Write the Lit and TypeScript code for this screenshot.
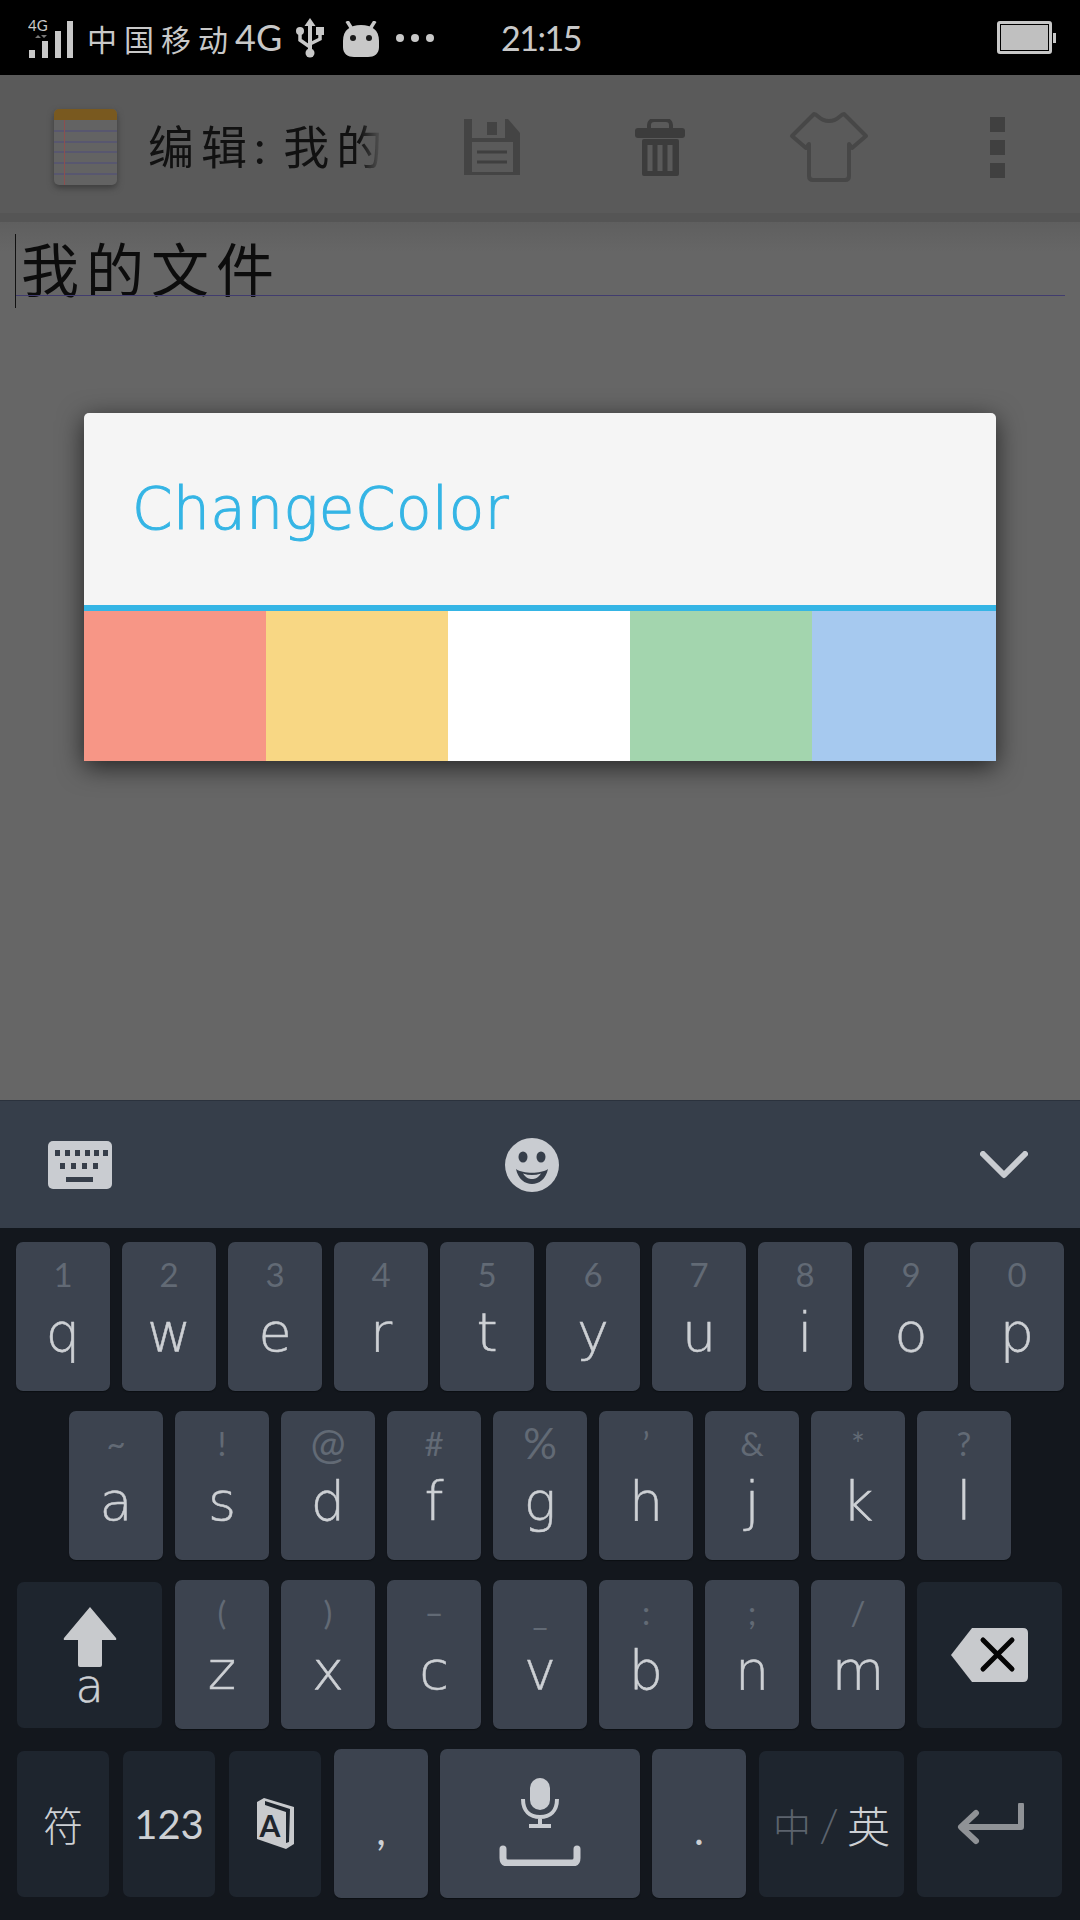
import { css, html, LitElement, svg } from 'lit';
import { customElement } from 'lit/decorators.js';

const SWATCHES = ['#f79686', '#f8d784', '#ffffff', '#a3d5ae', '#a6c9ef'];

const ROW_1 = [['1', 'q'], ['2', 'w'], ['3', 'e'], ['4', 'r'], ['5', 't'], ['6', 'y'], ['7', 'u'], ['8', 'i'], ['9', 'o'], ['0', 'p']];
const ROW_2 = [['~', 'a'], ['!', 's'], ['@', 'd'], ['#', 'f'], ['%', 'g'], ['’', 'h'], ['&', 'j'], ['*', 'k'], ['?', 'l']];
const ROW_3 = [['(', 'z'], [')', 'x'], ['–', 'c'], ['_', 'v'], [':', 'b'], [';', 'n'], ['/', 'm']];

const icon = (w: number, h: number, body: unknown) => html`<svg width=${w} height=${h} viewBox="0 0 ${w} ${h}">${body}</svg>`;

const signalIcon = icon(46, 42, svg`
    <text x="0" y="14" font-size="15" font-family="Lato, sans-serif" fill="#c8c8c8">4G</text>
    <path d="M7 21l3-3 3 3zM13 18h6l-3 3z" fill="#777" />
    <rect x="1" y="33" width="6" height="8" fill="#c8c8c8" />
    <rect x="14" y="24" width="6" height="17" fill="#c8c8c8" />
    <rect x="27" y="14" width="6" height="27" fill="#c8c8c8" />
    <rect x="39" y="4" width="6" height="37" fill="#c8c8c8" />`);

const usbIcon = icon(30, 40, svg`
    <path d="M15 0l5.500 8h-3.500v24h-4V8H9.500z" fill="#c8c8c8" />
    <circle cx="15" cy="35" r="4.500" fill="#c8c8c8" />
    <path d="M15 29L5 22V15M15 26l10-5v-6" fill="none" stroke="#c8c8c8" stroke-width="3.500" />
    <circle cx="5" cy="13" r="4" fill="#c8c8c8" />
    <rect x="21" y="9" width="8" height="8" fill="#c8c8c8" />`);

const androidIcon = icon(36, 36, svg`
    <path d="M4 0l5 8M32 0l-5 8" stroke="#c8c8c8" stroke-width="3.500" />
    <path d="M18 4C29 4 36 9 36 20V26C36 33 31 36 25 36H11C5 36 0 33 0 26V20C0 9 7 4 18 4Z" fill="#c8c8c8" />
    <circle cx="10" cy="17" r="3" fill="#1a1a1a" />
    <circle cx="26" cy="17" r="3" fill="#1a1a1a" />`);

const notepadIcon = icon(63, 76, svg`
    <rect x="0" y="0" width="63" height="76" rx="5" fill="#636363" />
    <path d="M0 11V5a5 5 0 0 1 5-5h53a5 5 0 0 1 5 5v6z" fill="#79591f" />
    <path d="M0 22h63M0 33h63M0 43h63M0 54h63M0 65h63" stroke="#4f4c7c" stroke-width="1" />
    <path d="M10.500 11v65" stroke="#8c4f4f" stroke-width="1" />`);

const saveIcon = icon(56, 56, svg`
    <path d="M0 0H44L56 14V56H0Z" fill="#444" />
    <rect x="8" y="0" width="33" height="19" fill="#5a5a5a" />
    <rect x="23" y="3" width="10" height="13" fill="#434343" />
    <rect x="8" y="23" width="41" height="30" fill="#5a5a5a" />
    <path d="M13 33h30M13 43h30" stroke="#3f3f3f" stroke-width="3" />`);

const trashIcon = icon(50, 57, svg`
    <path d="M14 9V6a5 5 0 0 1 5-5h12a5 5 0 0 1 5 5v3" fill="none" stroke="#3c3c3c" stroke-width="4" />
    <rect x="0" y="9" width="50" height="10" rx="3" fill="#3c3c3c" />
    <rect x="7" y="20" width="37" height="37" rx="2" fill="#3c3c3c" />
    <path d="M15 26v26M25 26v26M35 26v26" stroke="#5a5a5a" stroke-width="5" />`);

const shirtIcon = icon(80, 72, svg`
    <path d="M25 3C29 3 30 10 40 10C50 10 51 3 55 3L77 25L63 37L60 33V65Q60 69 56 69H24Q20 69 20 65V33L17 37L3 25Z"
        fill="none" stroke="#474747" stroke-width="4" stroke-linejoin="round" />`);

const keyboardIcon = icon(64, 48, svg`
    <rect width="64" height="48" rx="5" fill="#c9ccd1" />
    <g fill="#363e4a">
        <rect x="7" y="9" width="5" height="6" /><rect x="17" y="9" width="5" height="6" /><rect x="27" y="9" width="5" height="6" />
        <rect x="37" y="9" width="5" height="6" /><rect x="46" y="9" width="5" height="6" /><rect x="55" y="9" width="5" height="6" />
        <rect x="12" y="22" width="5" height="6" /><rect x="23" y="22" width="5" height="6" /><rect x="34" y="22" width="5" height="6" /><rect x="45" y="22" width="5" height="6" />
        <rect x="18" y="36" width="27" height="5" />
    </g>`);

const smileIcon = icon(54, 54, svg`
    <circle cx="27" cy="27" r="27" fill="#c9ccd1" />
    <ellipse cx="18" cy="19" rx="4.500" ry="5.500" fill="#363e4a" />
    <ellipse cx="36" cy="19" rx="4.500" ry="5.500" fill="#363e4a" />
    <path d="M11 31C18 36 36 36 43 31C41 41 34 46 27 46C20 46 13 41 11 31Z" fill="#363e4a" />
    <path d="M18 35.500C24 37.500 30 37.500 36 35.500C33 40 30 41 27 41C24 41 21 40 18 35.500Z" fill="#c9ccd1" />`);

const chevronIcon = icon(48, 28, svg`
    <path d="M3 3L24 24L45 3" fill="none" stroke="#c9ccd1" stroke-width="6" stroke-linecap="round" stroke-linejoin="round" />`);

const shiftIcon = icon(54, 62, svg`
    <path d="M27 1L53 32Q54 34 52 34H39V59Q39 61 37 61H17Q15 61 15 59V34H2Q0 34 1 32Z" fill="#c8cacd" />`);

const deleteIcon = icon(77, 54, svg`
    <path d="M21 0H72Q77 0 77 5V49Q77 54 72 54H21L0 27Z" fill="#c8cacd" />
    <path d="M32 12L61 41M61 12L32 41" stroke="#050505" stroke-width="5" stroke-linecap="round" />`);

const enterIcon = icon(68, 42, svg`
    <path d="M65 2V24H6M20 10L5 24L20 38" fill="none" stroke="#8f9296" stroke-width="6" stroke-linecap="round" stroke-linejoin="round" />`);

const bookIcon = icon(37, 52, svg`
    <path d="M0 4L7 0L37 9V46L29 51L0 41Z" fill="#c8cacd" />
    <path d="M8 3L33 11L32 44L29 45V14L8 7Z" fill="#1e252e" />
    <text x="13" y="39" font-size="30" font-weight="700" text-anchor="middle" font-family="Lato, sans-serif" fill="#1e252e">A</text>`);

const spaceIcon = icon(82, 88, svg`
    <rect x="31" y="0" width="20" height="32" rx="10" fill="#c9ccd1" />
    <path d="M24 21C24 33 31 39 41 39C51 39 58 33 58 21M41 39V48M30 48H52" fill="none" stroke="#c9ccd1" stroke-width="4" />
    <path d="M4 71V80Q4 85 9 85H73Q78 85 78 80V71" fill="none" stroke="#c9ccd1" stroke-width="7" stroke-linecap="round" />`);

@customElement('soft-keyboard')
export class SoftKeyboard extends LitElement {
    static styles = css`
        :host {
            display: block;
            background: #13171d;
            font-family: Lato, 'Noto Sans CJK SC', sans-serif;
        }
        .tools {
            height: 127px;
            border-top: 1px solid #2b323d;
            background: #363e4a;
            display: flex;
            align-items: center;
            padding: 0 52px 0 48px;
            justify-content: space-between;
        }
        .smile {
            display: flex;
            margin-right: 28px;
        }
        .keys {
            display: flex;
            flex-direction: column;
            gap: 20px;
            padding: 14px 0 22px;
        }
        .row {
            display: flex;
            gap: 12px;
            height: 149px;
        }
        .row.first {
            padding-left: 16px;
        }
        .row.second {
            padding-left: 69px;
        }
        .row.side {
            padding-left: 17px;
        }
        .key {
            width: 94px;
            height: 149px;
            box-sizing: border-box;
            padding-top: 12px;
            border-radius: 7px;
            background: #3c434f;
            box-shadow: 0 1px 1px #0c0f13;
            display: flex;
            flex-direction: column;
            align-items: center;
            flex: none;
        }
        .hint {
            font-size: 33px;
            line-height: 40px;
            color: #626a75;
        }
        .hint.big {
            font-size: 42px;
        }
        .letter {
            margin-top: 9px;
            font-family: 'DejaVu Sans', sans-serif;
            font-size: 54px;
            line-height: 60px;
            font-weight: 200;
            color: #cdd0d4;
            -webkit-text-stroke: 0.5px #cdd0d4;
        }
        .punct {
            padding-top: 50px;
            font-size: 42px;
            line-height: 60px;
            color: #cdd0d4;
        }
        .key.space {
            width: 200px;
            padding-top: 29px;
        }
        .fn {
            margin: 2px 2px 0 0;
            width: 92px;
            height: 146px;
            padding-top: 0;
            background: #1e252e;
            box-shadow: none;
            justify-content: center;
            color: #cdd0d4;
        }
        .fn.wide {
            width: 145px;
            margin-right: 1px;
        }
        .fn.last {
            margin-right: 0;
        }
        .fn.shift {
            justify-content: flex-start;
            padding-top: 24px;
        }
        .shift-letter {
            font-family: 'DejaVu Sans', sans-serif;
            font-size: 46px;
            font-weight: 200;
            line-height: 36px;
            -webkit-text-stroke: 0.5px #cdd0d4;
        }
        .sym {
            font-size: 40px;
            font-weight: 300;
        }
        .num {
            font-size: 40px;
        }
        .lang {
            flex-direction: row;
            font-size: 38px;
            gap: 8px;
            font-weight: 300;
        }
        .dim {
            color: #5c636d;
        }
        .slash {
            font-size: 46px;
        }
        .en {
            font-size: 43px;
        }
        .after-fn {
            margin-left: -1px;
        }
        .after-period {
            margin-left: 1px;
        }
    `;

    private charKey([hint, letter]: string[]) {
        const big = hint === '@' || hint === '%';
        return html`<div class="key"><span class="hint ${big ? 'big' : ''}">${hint}</span><span class="letter">${letter}</span></div>`;
    }

    render() {
        return html`
            <div class="tools">${keyboardIcon}<span class="smile">${smileIcon}</span>${chevronIcon}</div>
            <div class="keys">
                <div class="row first">${ROW_1.map((k) => this.charKey(k))}</div>
                <div class="row second">${ROW_2.map((k) => this.charKey(k))}</div>
                <div class="row side">
                    <div class="key fn wide shift">${shiftIcon}<span class="shift-letter">a</span></div>
                    ${ROW_3.map((k) => this.charKey(k))}
                    <div class="key fn wide last">${deleteIcon}</div>
                </div>
                <div class="row side">
                    <div class="key fn"><span class="sym">符</span></div>
                    <div class="key fn"><span class="num">123</span></div>
                    <div class="key fn">${bookIcon}</div>
                    <div class="key punct after-fn">,</div>
                    <div class="key space">${spaceIcon}</div>
                    <div class="key punct">.</div>
                    <div class="key fn wide lang after-period">
                        <span class="dim">中</span><span class="dim slash">/</span><span class="en">英</span>
                    </div>
                    <div class="key fn wide last">${enterIcon}</div>
                </div>
            </div>
        `;
    }
}

@customElement('app-root')
export class AppRoot extends LitElement {
    static styles = css`
        :host {
            display: flex;
            flex-direction: column;
            width: 1080px;
            height: 1920px;
            overflow: hidden;
            font-family: Lato, 'Noto Sans CJK SC', sans-serif;
        }
        .status {
            height: 75px;
            flex: none;
            background: #000;
            color: #c8c8c8;
            display: flex;
            align-items: center;
            padding: 0 24px 0 28px;
        }
        .carrier {
            margin-left: 13px;
            font-size: 30px;
            letter-spacing: 7px;
            width: 197px;
            white-space: nowrap;
        }
        .carrier b {
            font-size: 36px;
            font-weight: 400;
            letter-spacing: 0;
        }
        .usb {
            display: flex;
            margin: 0 0 0 11px;
        }
        .droid {
            display: flex;
            margin: 2px 0 0 18px;
        }
        .more {
            display: flex;
            gap: 7px;
            margin-left: 17px;
        }
        .more i {
            width: 8px;
            height: 8px;
            border-radius: 50%;
            background: #c8c8c8;
        }
        .time {
            margin-left: 67px;
            font-size: 34px;
            letter-spacing: -1.500px;
        }
        .battery {
            margin-left: auto;
            display: flex;
            align-items: center;
            gap: 1px;
        }
        .battery-body {
            width: 55px;
            height: 33px;
            box-sizing: border-box;
            border: 3px solid #c8c8c8;
            border-radius: 3px;
            padding: 1px;
            background: #000;
        }
        .battery-body i {
            display: block;
            height: 100%;
            background: #c0c0c0;
        }
        .battery-tip {
            width: 3px;
            height: 10px;
            background: #c8c8c8;
        }
        .toolbar {
            height: 132px;
            flex: none;
            background: #5a5a5a;
            display: flex;
            align-items: center;
            padding: 6px 0 0 54px;
            border-bottom: 9px solid #555;
        }
        .toolbar svg {
            display: block;
            flex: none;
        }
        .note {
            filter: drop-shadow(0 3px 3px #3c3c3c);
        }
        .title {
            margin: -6px 0 0 31px;
            width: 240px;
            white-space: nowrap;
            font-size: 46px;
            letter-spacing: 7px;
            word-spacing: -8px;
            color: #111;
            -webkit-mask-image: linear-gradient(to right, #000 88%, transparent 98%);
            mask-image: linear-gradient(to right, #000 88%, transparent 98%);
        }
        .save {
            margin-left: 76px;
        }
        .trash {
            margin-left: 115px;
        }
        .shirt {
            margin-left: 104px;
        }
        .menu {
            margin-left: 121px;
            display: flex;
            flex-direction: column;
            gap: 8px;
        }
        .menu i {
            display: block;
            width: 15px;
            height: 15px;
            background: #404040;
        }
        .body {
            flex: 1;
            min-height: 0;
            background: linear-gradient(#5f5f5f, #666 30px);
            padding-top: 12px;
        }
        .field {
            margin-left: 15px;
            width: 1050px;
            height: 74px;
            box-sizing: border-box;
            position: relative;
            border-left: 1px solid #111;
            padding-left: 5px;
            font-size: 58px;
            letter-spacing: 7px;
            line-height: 72px;
            color: #0c0c0c;
        }
        .field::after {
            content: '';
            position: absolute;
            left: 0;
            right: 0;
            top: 61px;
            border-bottom: 1px solid #413c6e;
        }
        .dialog {
            margin: 105px 0 0 84px;
            width: 912px;
            border-radius: 5px 5px 0 0;
            box-shadow: 0 6px 26px rgba(0, 0, 0, 0.65);
        }
        .dialog-title {
            height: 198px;
            box-sizing: border-box;
            border-radius: 5px 5px 0 0;
            background: #f5f5f5;
            display: flex;
            align-items: center;
            padding-left: 48px;
            border-bottom: 6px solid #35b5e5;
            font-family: 'DejaVu Sans', sans-serif;
            font-size: 58px;
            font-weight: 200;
            letter-spacing: 0.5px;
            color: #35b5e5;
            -webkit-text-stroke: 1px #35b5e5;
        }
        .swatches {
            display: flex;
            height: 150px;
        }
        .swatches div {
            width: 182px;
            flex: none;
        }
        .swatches div:last-child {
            flex: 1;
        }
    `;

    render() {
        return html`
            <div class="status">
                ${signalIcon}
                <span class="carrier">中国移动<b>4G</b></span>
                <span class="usb">${usbIcon}</span>
                <span class="droid">${androidIcon}</span>
                <span class="more"><i></i><i></i><i></i></span>
                <span class="time">21:15</span>
                <span class="battery">
                    <span class="battery-body"><i></i></span>
                    <span class="battery-tip"></span>
                </span>
            </div>
            <div class="toolbar">
                <span class="note">${notepadIcon}</span>
                <span class="title">编辑: 我的</span>
                <span class="save">${saveIcon}</span>
                <span class="trash">${trashIcon}</span>
                <span class="shirt">${shirtIcon}</span>
                <span class="menu"><i></i><i></i><i></i></span>
            </div>
            <div class="body">
                <div class="field">我的文件</div>
                <div class="dialog">
                    <div class="dialog-title">ChangeColor</div>
                    <div class="swatches">
                        ${SWATCHES.map((c) => html`<div style="background:${c}"></div>`)}
                    </div>
                </div>
            </div>
            <soft-keyboard></soft-keyboard>
        `;
    }
}

declare global {
    interface HTMLElementTagNameMap {
        'app-root': AppRoot;
        'soft-keyboard': SoftKeyboard;
    }
}
